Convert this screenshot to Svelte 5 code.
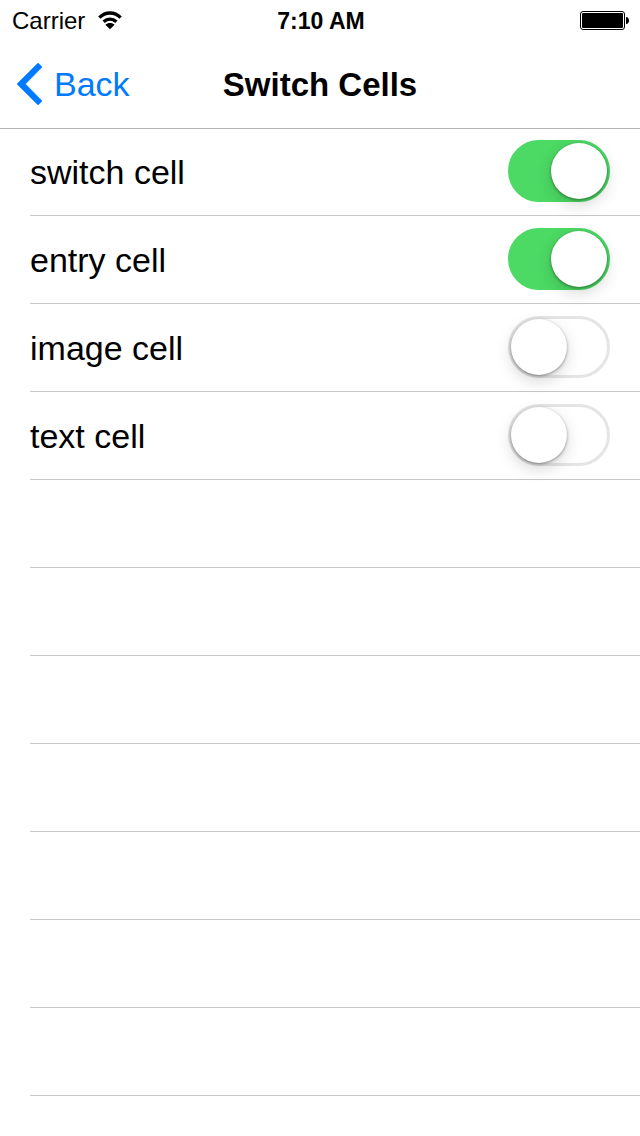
<script>
  let cells = $state([
    { label: 'switch cell', on: true },
    { label: 'entry cell', on: true },
    { label: 'image cell', on: false },
    { label: 'text cell', on: false }
  ]);
  const blanks = [1, 2, 3, 4, 5, 6, 7];
</script>

<div class="screen">
  <div class="status">
    <div class="carrier">
      <span>Carrier</span>
      <svg class="wifi" viewBox="0 0 26 20" aria-hidden="true">
        <g fill="none" stroke="#000" stroke-width="3.4">
          <path d="M2.4 7.6C8.4 1.4 17.6 1.4 23.6 7.6" />
          <path d="M6.6 11.8c3.8-3.4 9-3.4 12.8 0" />
        </g>
        <path d="M13 19.2l-4.6-4.4c2.4-2.5 6.8-2.5 9.2 0z" />
      </svg>
    </div>
    <time>7:10 AM</time>
    <svg class="battery" viewBox="0 0 50 20" aria-hidden="true">
      <rect x="0.5" y="1.5" width="44" height="18" rx="2.5" fill="none" stroke="#000" />
      <rect x="2" y="3" width="41" height="15" rx="1" />
      <path d="M46 7c4 0 4 7 0 7z" />
    </svg>
  </div>

  <header>
    <button class="back" type="button">
      <svg viewBox="0 0 26 42" aria-hidden="true">
        <path d="M1 21L21.5.6q.6-.6 1.2 0L25.6 3.4q.6.6 0 1.2L9.4 21l16.2 16.4q.6.6 0 1.2l-2.9 2.8q-.6.6-1.2 0z" fill="#007aff" stroke="#007aff" stroke-width="0.6" />
      </svg>
      <span>Back</span>
    </button>
    <h1>Switch Cells</h1>
  </header>

  <main>
    {#each cells as cell}
      <label class="row">
        <span>{cell.label}</span>
        <input type="checkbox" role="switch" bind:checked={cell.on} />
      </label>
    {/each}
    {#each blanks as blank (blank)}
      <div class="row"></div>
    {/each}
  </main>
</div>

<style>
  :global(body) {
    margin: 0;
    background: #fff;
  }
  .screen {
    min-height: 100vh;
    background: #fff;
    color: #000;
    font-family: "Liberation Sans", Arial, sans-serif;
    font-size: 34px;
  }
  .status {
    display: grid;
    grid-template-columns: 1fr auto 1fr;
    align-items: center;
    height: 40px;
    padding: 0 10px 0 12px;
    font-size: 24px;
  }
  .status span,
  time {
    padding-top: 2px;
  }
  .carrier {
    display: flex;
    align-items: center;
    gap: 12px;
  }
  .wifi {
    width: 26px;
    height: 20px;
  }
  time {
    font-weight: 700;
    font-size: 23px;
  }
  .battery {
    justify-self: end;
    width: 50px;
    height: 20px;
  }
  header {
    display: grid;
    grid-template-columns: 1fr auto 1fr;
    align-items: center;
    height: 88px;
    padding: 0 16px;
    border-bottom: 1px solid #b2b2b2;
  }
  .back {
    display: flex;
    justify-self: start;
    align-items: center;
    gap: 12px;
    padding: 0;
    border: 0;
    background: none;
    color: #007aff;
    font: inherit;
  }
  .back svg {
    width: 26px;
    height: 42px;
  }
  h1 {
    margin: 0;
    padding-top: 2px;
    font-size: 33px;
    font-weight: 700;
  }
  .row {
    display: flex;
    align-items: center;
    justify-content: space-between;
    box-sizing: border-box;
    height: 88px;
    margin-left: 30px;
    padding: 0 30px 2px 0;
    border-bottom: 1px solid #c8c7cc;
  }
  .row:first-child {
    height: 87px;
  }
  .row span {
    padding-top: 3px;
  }
  input {
    appearance: none;
    display: flex;
    align-items: center;
    box-sizing: border-box;
    width: 102px;
    height: 62px;
    margin: 0;
    padding: 0;
    border: 3px solid #e5e5e5;
    border-radius: 31px;
    background: #fff;
  }
  input::before {
    content: "";
    width: 56px;
    height: 56px;
    border-radius: 50%;
    background: #fff;
    box-shadow: 0 1px 3px rgba(0, 0, 0, 0.4), 0 6px 16px rgba(0, 0, 0, 0.16);
  }
  input:checked {
    justify-content: flex-end;
    border-color: #4cd964;
    background: #4cd964;
  }
</style>
